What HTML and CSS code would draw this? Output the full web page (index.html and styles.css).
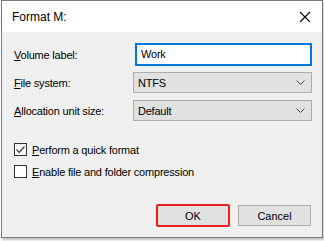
FILE: index.html
```html
<!DOCTYPE html>
<html>
<head>
<meta charset="utf-8">
<link rel="stylesheet" href="styles.css">
</head>
<body>
<div class="window">
  <div class="titlebar">
    <span class="title">Format M:</span>
    <svg class="close" width="12" height="12" viewBox="0 0 12 12"><path d="M1 1L11 11M11 1L1 11" stroke="#000" stroke-width="1.1" fill="none"/></svg>
  </div>
  <div class="content">
    <div class="form">
      <div class="row">
        <span class="label"><u>V</u>olume label:</span>
        <div class="input">Work</div>
      </div>
      <div class="row">
        <span class="label"><u>F</u>ile system:</span>
        <div class="select"><span>NTFS</span><svg width="9" height="5" viewBox="0 0 9 5"><path d="M0.5 0.5L4.5 4.5L8.5 0.5" stroke="#444" stroke-width="1" fill="none"/></svg></div>
      </div>
      <div class="row">
        <span class="label"><u>A</u>llocation unit size:</span>
        <div class="select"><span>Default</span><svg width="9" height="5" viewBox="0 0 9 5"><path d="M0.5 0.5L4.5 4.5L8.5 0.5" stroke="#444" stroke-width="1" fill="none"/></svg></div>
      </div>
    </div>
    <div class="checks">
      <div class="check"><span class="box"><svg width="11" height="11" viewBox="0 0 11 11"><path d="M1.5 5.5L4.2 8.3L9.5 2.5" stroke="#333" stroke-width="1.2" fill="none"/></svg></span><span><u>P</u>erform a quick format</span></div>
      <div class="check"><span class="box"></span><span><u>E</u>nable file and folder compression</span></div>
    </div>
    <div class="buttons">
      <div class="btn ok">OK</div>
      <div class="btn">Cancel</div>
    </div>
  </div>
</div>
</body>
</html>
```
FILE: styles.css
```css
html, body {
  margin: 0;
  padding: 0;
  background: #ffffff;
}
body {
  width: 324px;
  height: 241px;
  font-family: "Liberation Sans", Arial, sans-serif;
  font-size: 11px;
  letter-spacing: -0.2px;
  color: #000;
}
.window {
  margin-left: 1px;
  width: 320px;
  height: 236px;
  border: 1px solid #7a7a7a;
  box-shadow: 1px 2px 2px rgba(0,0,0,0.25);
  background: #f0f0f0;
  display: flex;
  flex-direction: column;
  box-sizing: content-box;
}
.titlebar {
  height: 31px;
  background: #fff;
  display: flex;
  align-items: center;
  justify-content: space-between;
  padding: 0 11px 0 10px;
}
.title {
  font-size: 12px;
  letter-spacing: 0;
  margin-top: 1px;
}
.close {
  display: block;
}
.content {
  flex: 1;
  display: flex;
  flex-direction: column;
  padding: 11px 10px 0 12px;
}
.form {
  display: flex;
  flex-direction: column;
  gap: 7px;
}
.row {
  display: flex;
  align-items: center;
  height: 21px;
}
.row:first-child {
  height: 23px;
  margin-bottom: -1px;
}
.label {
  width: 121px;
}
.input {
  width: 169px;
  height: 19px;
  border: 2px solid #0078d7;
  background: #fff;
  padding-left: 4px;
  line-height: 19px;
}
.select {
  width: 170px;
  height: 19px;
  border: 1px solid #adadad;
  background: #e1e1e1;
  display: flex;
  align-items: center;
  justify-content: space-between;
  padding: 0 6px 0 4px;
}
.select svg { display: block; }
.checks {
  margin-top: 22px;
  display: flex;
  flex-direction: column;
  gap: 9px;
}
.check {
  display: flex;
  align-items: center;
  gap: 5px;
  height: 13px;
}
.box {
  width: 11px;
  height: 11px;
  border: 1px solid #333;
  background: #fff;
  display: flex;
}
.buttons {
  margin-top: 27px;
  display: flex;
  justify-content: flex-end;
  gap: 8px;
  padding-right: 1px;
}
.btn {
  width: 73px;
  height: 21px;
  box-sizing: border-box;
  border: 1px solid #adadad;
  background: #e1e1e1;
  display: flex;
  align-items: center;
  justify-content: center;
  letter-spacing: 0;
}
.btn.ok {
  border: 2px solid #e8231f;
  border-radius: 2px;
  box-shadow: inset 0 0 0 1px #e1e1e1;
  height: 23px;
  width: 74px;
  margin-top: -1px;
}
```
